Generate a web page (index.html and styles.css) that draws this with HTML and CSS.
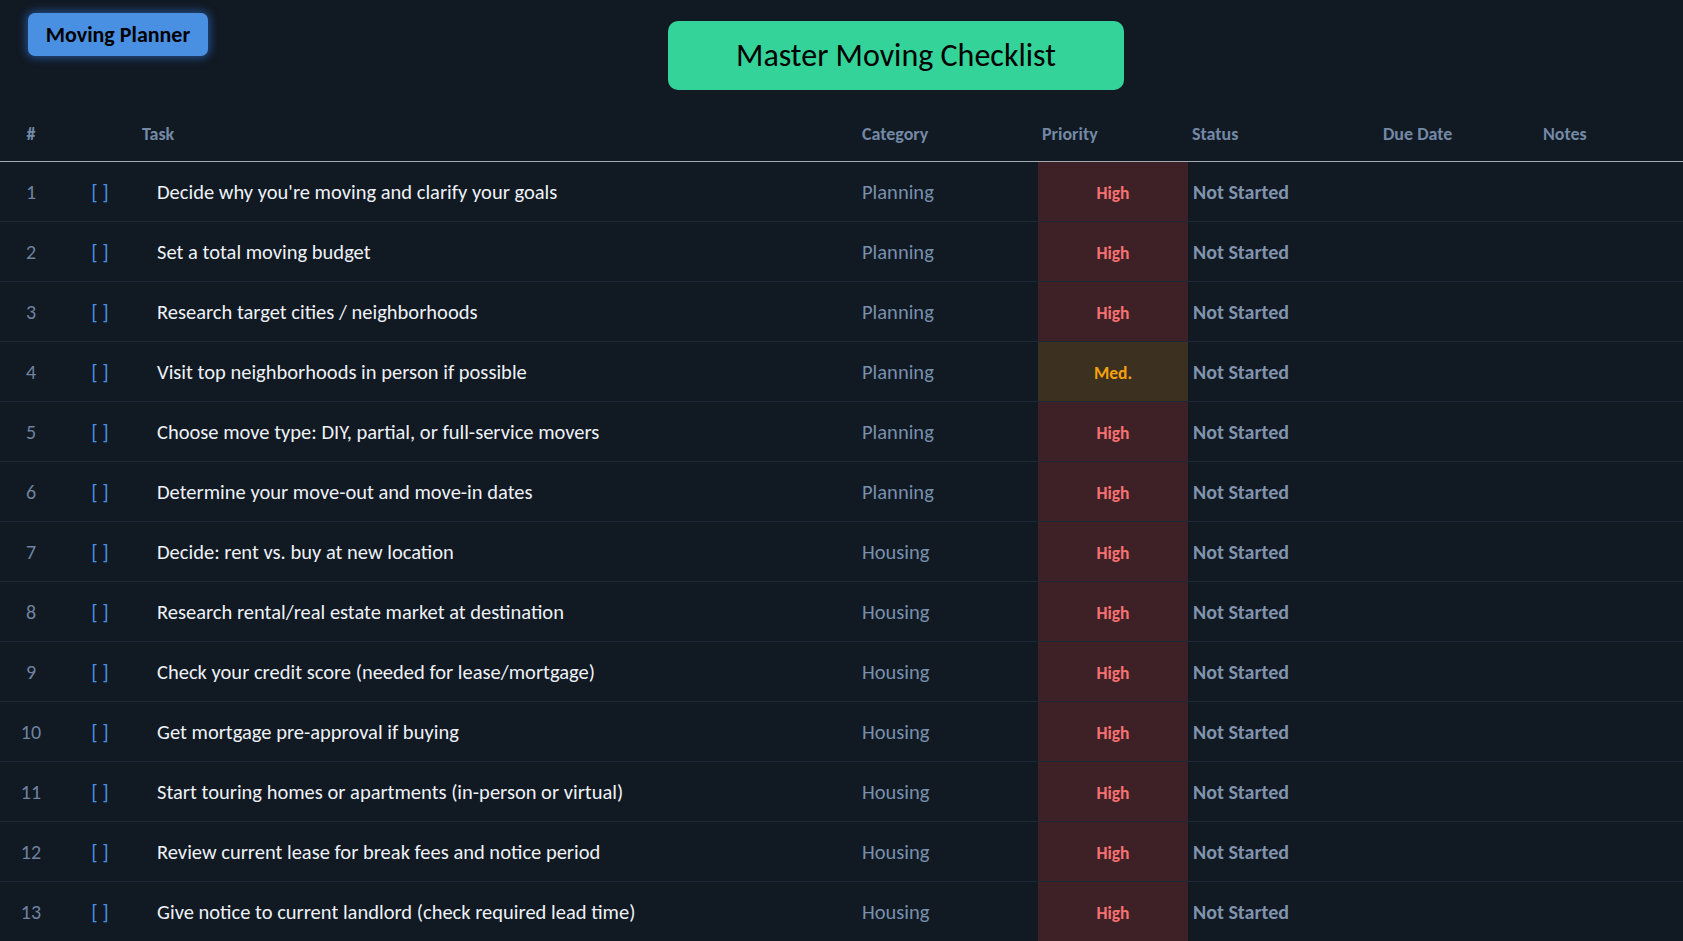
FILE: index.html
```html
<!DOCTYPE html>
<html lang="en">
<head>
<meta charset="utf-8">
<title>Master Moving Checklist</title>
<link rel="stylesheet" href="styles.css">
</head>
<body>
<div class="page">
  <header class="topbar">
    <button class="planner-btn">Moving Planner</button>
    <h1 class="title-box">Master Moving Checklist</h1>
  </header>
  <table class="checklist">
    <thead>
      <tr>
        <th class="c-num">#</th>
        <th class="c-check"></th>
        <th class="c-task">Task</th>
        <th class="c-cat">Category</th>
        <th class="c-pri">Priority</th>
        <th class="c-status">Status</th>
        <th class="c-due">Due Date</th>
        <th class="c-notes">Notes</th>
      </tr>
    </thead>
    <tbody>
      <tr><td class="c-num">1</td><td class="c-check">[ ]</td><td class="c-task">Decide why you're moving and clarify your goals</td><td class="c-cat">Planning</td><td class="c-pri high">High</td><td class="c-status">Not Started</td><td class="c-due"></td><td class="c-notes"></td></tr>
      <tr><td class="c-num">2</td><td class="c-check">[ ]</td><td class="c-task">Set a total moving budget</td><td class="c-cat">Planning</td><td class="c-pri high">High</td><td class="c-status">Not Started</td><td class="c-due"></td><td class="c-notes"></td></tr>
      <tr><td class="c-num">3</td><td class="c-check">[ ]</td><td class="c-task">Research target cities / neighborhoods</td><td class="c-cat">Planning</td><td class="c-pri high">High</td><td class="c-status">Not Started</td><td class="c-due"></td><td class="c-notes"></td></tr>
      <tr><td class="c-num">4</td><td class="c-check">[ ]</td><td class="c-task">Visit top neighborhoods in person if possible</td><td class="c-cat">Planning</td><td class="c-pri med">Med.</td><td class="c-status">Not Started</td><td class="c-due"></td><td class="c-notes"></td></tr>
      <tr><td class="c-num">5</td><td class="c-check">[ ]</td><td class="c-task">Choose move type: DIY, partial, or full-service movers</td><td class="c-cat">Planning</td><td class="c-pri high">High</td><td class="c-status">Not Started</td><td class="c-due"></td><td class="c-notes"></td></tr>
      <tr><td class="c-num">6</td><td class="c-check">[ ]</td><td class="c-task">Determine your move-out and move-in dates</td><td class="c-cat">Planning</td><td class="c-pri high">High</td><td class="c-status">Not Started</td><td class="c-due"></td><td class="c-notes"></td></tr>
      <tr><td class="c-num">7</td><td class="c-check">[ ]</td><td class="c-task">Decide: rent vs. buy at new location</td><td class="c-cat">Housing</td><td class="c-pri high">High</td><td class="c-status">Not Started</td><td class="c-due"></td><td class="c-notes"></td></tr>
      <tr><td class="c-num">8</td><td class="c-check">[ ]</td><td class="c-task">Research rental/real estate market at destination</td><td class="c-cat">Housing</td><td class="c-pri high">High</td><td class="c-status">Not Started</td><td class="c-due"></td><td class="c-notes"></td></tr>
      <tr><td class="c-num">9</td><td class="c-check">[ ]</td><td class="c-task">Check your credit score (needed for lease/mortgage)</td><td class="c-cat">Housing</td><td class="c-pri high">High</td><td class="c-status">Not Started</td><td class="c-due"></td><td class="c-notes"></td></tr>
      <tr><td class="c-num">10</td><td class="c-check">[ ]</td><td class="c-task">Get mortgage pre-approval if buying</td><td class="c-cat">Housing</td><td class="c-pri high">High</td><td class="c-status">Not Started</td><td class="c-due"></td><td class="c-notes"></td></tr>
      <tr><td class="c-num">11</td><td class="c-check">[ ]</td><td class="c-task">Start touring homes or apartments (in-person or virtual)</td><td class="c-cat">Housing</td><td class="c-pri high">High</td><td class="c-status">Not Started</td><td class="c-due"></td><td class="c-notes"></td></tr>
      <tr><td class="c-num">12</td><td class="c-check">[ ]</td><td class="c-task">Review current lease for break fees and notice period</td><td class="c-cat">Housing</td><td class="c-pri high">High</td><td class="c-status">Not Started</td><td class="c-due"></td><td class="c-notes"></td></tr>
      <tr><td class="c-num">13</td><td class="c-check">[ ]</td><td class="c-task">Give notice to current landlord (check required lead time)</td><td class="c-cat">Housing</td><td class="c-pri high">High</td><td class="c-status">Not Started</td><td class="c-due"></td><td class="c-notes"></td></tr>
    </tbody>
  </table>
</div>
</body>
</html>
```

FILE: styles.css
```css
* { box-sizing: border-box; }
html, body {
  margin: 0;
  padding: 0;
  background: #111923;
  overflow: hidden;
}
body {
  font-family: Carlito, Lato, sans-serif;
  color: #e8edf3;
}
.page {
  width: 1683px;
  height: 941px;
  overflow: hidden;
}
.topbar {
  display: flex;
  align-items: flex-start;
  height: 107px;
  padding: 13px 0 0 28px;
}
.planner-btn {
  width: 180px;
  height: 43px;
  border: none;
  border-radius: 7px;
  background: #4a90e2;
  color: #000;
  font-family: inherit;
  font-weight: bold;
  font-size: 22px;
  padding: 0;
  box-shadow: 0 0 8px 2px rgba(50, 120, 220, 0.55);
}
.title-box {
  margin: 8px 0 0 460px;
  width: 456px;
  height: 69px;
  border-radius: 10px;
  background: #34d399;
  color: #000;
  font-weight: normal;
  font-size: 32px;
  display: flex;
  align-items: center;
  justify-content: center;
}
.checklist {
  width: 1683px;
  border-collapse: collapse;
  table-layout: fixed;
}
.checklist th {
  height: 54px;
  font-size: 18px;
  font-weight: bold;
  color: #7389a6;
  text-align: left;
  vertical-align: middle;
  padding: 0 0 0 4px;
  border-bottom: 1px solid #a3aab2;
}
.checklist td {
  height: 60px;
  font-size: 20.5px;
  vertical-align: middle;
  padding: 1px 0 0 0;
  border-bottom: 1px solid #1d2937;
}
.c-num { width: 62px; }
.c-check { width: 76px; }
.c-task { width: 720px; }
.c-cat { width: 180px; }
.c-pri { width: 150px; }
.c-status { width: 191px; }
.c-due { width: 160px; }
.c-notes { width: 144px; }

.checklist th.c-num { text-align: center; padding: 0; }
td.c-num { text-align: center; color: #6f83a0; font-size: 20px; }
td.c-check { text-align: center; color: #4a8fe0; font-size: 21px; }
td.c-task { padding-left: 19px; color: #eef2f7; }
td.c-cat { padding-left: 4px; color: #7890ad; }
td.c-pri { text-align: center; font-weight: bold; font-size: 17.5px; padding-top: 3px; }
td.high { background: #3e2127; color: #f87171; }
td.med { background: #3c3021; color: #f5a10d; }
td.c-status { padding-left: 5px; font-weight: bold; color: #8194ae; font-size: 20px; }
```
